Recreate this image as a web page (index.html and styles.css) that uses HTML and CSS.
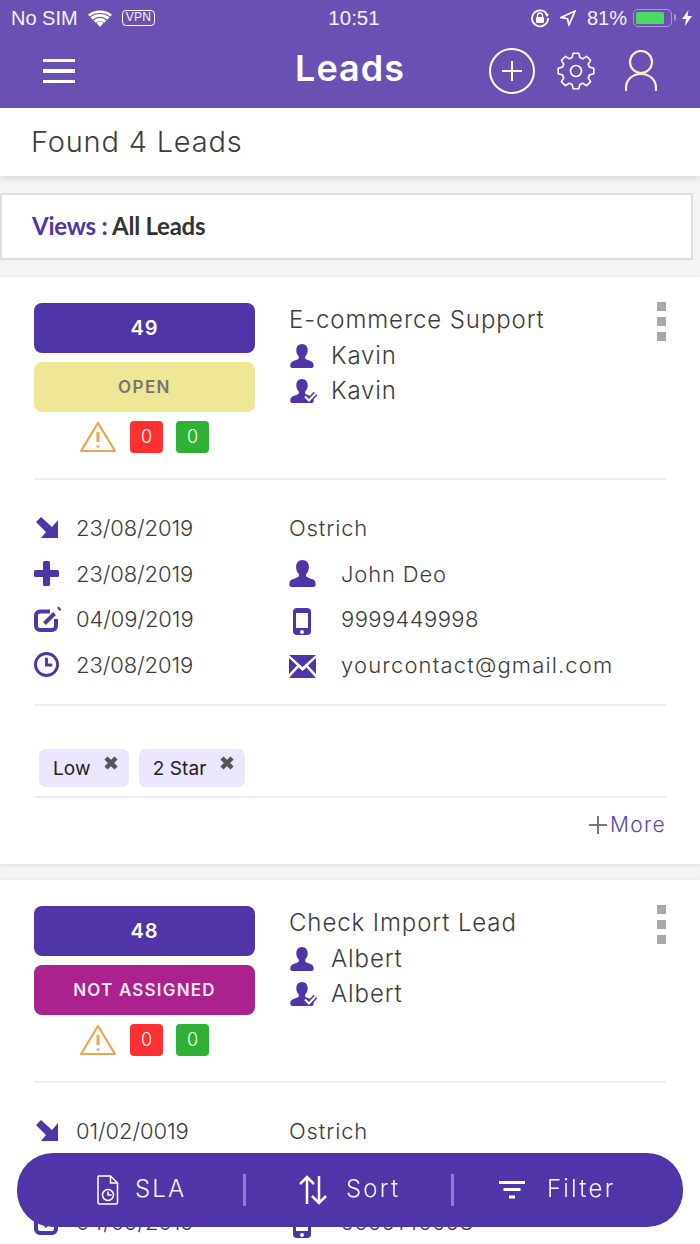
FILE: index.html
```html
<!DOCTYPE html>
<html lang="en">
<head>
<meta charset="utf-8">
<title>Leads</title>
<link rel="stylesheet" href="styles.css">
</head>
<body>
<svg class="defs" width="0" height="0" aria-hidden="true">
  <symbol id="i-person" viewBox="0 0 24 24"><path d="M12 0c3.700 0 5.700 2.800 5.700 6.200 0 2.600-1 4.900-2.500 6.300v1.700c0 1 3.800 2 6.200 3.200 1.800.9 2.300 2.300 2.300 4.400 0 1.300-.8 2.200-2 2.200H2.300c-1.200 0-2-.9-2-2.200 0-2.100.5-3.500 2.300-4.400 2.400-1.200 6.200-2.200 6.200-3.200v-1.700C7.300 11.100 6.300 8.800 6.300 6.200 6.300 2.800 8.300 0 12 0z"/></symbol>
  <symbol id="i-assign" viewBox="0 0 28 24"><path d="M12 0c3.700 0 5.700 2.800 5.700 6.200 0 2.600-1 4.900-2.500 6.300v1.700c0 1 3.800 2 6.200 3.200 1.800.9 2.300 2.300 2.300 4.400 0 1.300-.8 2.200-2 2.200H2.300c-1.200 0-2-.9-2-2.200 0-2.100.5-3.500 2.300-4.400 2.400-1.200 6.200-2.200 6.200-3.200v-1.700C7.300 11.100 6.300 8.800 6.300 6.200 6.300 2.800 8.300 0 12 0z"/><path class="check-edge" d="M15 17.500l4 4 6.500-7"/><path class="check" d="M15 17.500l4 4 6.500-7"/></symbol>
  <symbol id="i-arrow" viewBox="0 0 22 21"><path d="M5 0L0 5l10 10-5 6h17V3l-6 7z"/></symbol>
  <symbol id="i-plus" viewBox="0 0 25 25"><path d="M9 1.500A1.500 1.500 0 0 1 10.500 0h4A1.500 1.500 0 0 1 16 1.500V9h7.500A1.500 1.500 0 0 1 25 10.500v4a1.500 1.500 0 0 1-1.500 1.500H16v7.500a1.500 1.500 0 0 1-1.500 1.500h-4A1.500 1.500 0 0 1 9 23.500V16H1.500A1.500 1.500 0 0 1 0 14.500v-4A1.500 1.500 0 0 1 1.500 9H9z"/></symbol>
  <symbol id="i-edit" viewBox="0 0 28 26"><path class="line-thick" d="M16 5.500H6a4 4 0 0 0-4 4V20a4 4 0 0 0 4 4h12a4 4 0 0 0 4-4V13"/><path class="line-thick" d="M10.500 17.500L20.500 7.500M24.500 3.500L26 2"/></symbol>
  <symbol id="i-clock" viewBox="0 0 26 26"><circle class="line" cx="13" cy="13" r="11.500"/><path class="line" d="M13 6v7.500h6"/></symbol>
  <symbol id="i-phone" viewBox="0 0 18 27"><path fill-rule="evenodd" d="M4 0h10a4 4 0 0 1 4 4v19a4 4 0 0 1-4 4H4a4 4 0 0 1-4-4V4a4 4 0 0 1 4-4zM3 5v15h12V5zm6 17a2 2 0 1 0 0 4 2 2 0 0 0 0-4z"/></symbol>
  <symbol id="i-mail" viewBox="0 0 27 23"><path d="M0 0h27L13.500 12zM0 3l8 7.500L0 19zM27 3v16l-8-8.500zM0 23l9.500-10.500 4 3.500 4-3.500L27 23z"/></symbol>
  <symbol id="i-warn" viewBox="0 0 38 32"><path class="warn-line" d="M19 2L2 30h34z"/><path class="warn-mark" d="M19 11v10M19 24.500v2"/></symbol>
  <symbol id="i-x" viewBox="0 0 18 18"><path class="x-line" d="M4 4l10 10M14 4L4 14"/></symbol>
</svg>

<header class="top">
  <div class="status">
    <div class="status-left">
      <span>No SIM</span>
      <svg class="wifi" viewBox="0 0 24 17"><path d="M12 17l3.500-4a5 5 0 0 0-7 0zM5.500 10.500l2 2.200a7 7 0 0 1 9 0l2-2.200a10 10 0 0 0-13 0zM2.500 7.300l2 2.200a12 12 0 0 1 15 0l2-2.200a15 15 0 0 0-19 0zM0 4.500l1.800 2a17 17 0 0 1 20.400 0l1.800-2a20 20 0 0 0-24 0z"/></svg>
      <span class="vpn">VPN</span>
    </div>
    <span class="clock-time">10:51</span>
    <div class="status-right">
      <svg class="lock" viewBox="0 0 20 20"><path class="stroke-white" d="M17 6.500A8 8 0 1 0 18 10"/><path d="M15 6h4l-2 3z"/><path class="stroke-thin" d="M7.500 9V7.500a2.500 2.500 0 0 1 5 0V9"/><rect x="6" y="9" width="8" height="6" rx="1"/></svg>
      <svg class="loc" viewBox="0 0 16 16"><path class="stroke-white" d="M15 1L1 7.500l6.500 1.200L9 15z"/></svg>
      <span>81%</span>
      <span class="battery"><span class="battery-fill"></span></span>
      <svg class="bolt" viewBox="0 0 10 16"><path d="M6.500 0L0 9h4l-1 7 7-10H5.500z"/></svg>
    </div>
  </div>
  <nav class="nav">
    <div class="burger"><span></span><span></span><span></span></div>
    <h1 class="title">Leads</h1>
    <div class="nav-icons">
      <svg class="nav-plus" viewBox="0 0 46 46"><circle cx="23" cy="23" r="22"/><path d="M23 13v20M13 23h20"/></svg>
      <svg class="nav-gear" viewBox="-20 -20 40 40"><polygon points="13.500,-3.900 17.800,-2.800 17.800,2.800 13.500,3.900 12.200,6.800 14.600,10.600 10.600,14.600 6.800,12.200 3.900,13.500 2.800,17.800 -2.800,17.800 -3.900,13.500 -6.800,12.200 -10.600,14.600 -14.600,10.600 -12.200,6.800 -13.500,3.900 -17.800,2.800 -17.800,-2.800 -13.500,-3.900 -12.200,-6.800 -14.600,-10.600 -10.600,-14.600 -6.800,-12.200 -3.900,-13.500 -2.800,-17.800 2.800,-17.800 3.900,-13.500 6.800,-12.200 10.600,-14.600 14.600,-10.600 12.200,-6.800"/><circle r="5.500"/></svg>
      <svg class="nav-user" viewBox="0 0 32 42"><circle cx="16" cy="12" r="11"/><path d="M1 41v-3c0-8 6-14 15-14s15 6 15 14v3"/></svg>
    </div>
  </nav>
</header>

<section class="found">Found 4 Leads</section>
<section class="views"><span class="views-label">Views :</span> All Leads</section>

<article class="card">
  <div class="summary">
    <div class="badges">
      <div class="badge badge-id">49</div>
      <div class="badge badge-open">OPEN</div>
      <div class="counts">
        <svg class="warn"><use href="#i-warn"/></svg>
        <span class="count count-red">0</span>
        <span class="count count-green">0</span>
      </div>
    </div>
    <div class="owner">
      <div class="owner-title">E-commerce Support</div>
      <div class="owner-row"><svg class="ico-owner"><use href="#i-person"/></svg>Kavin</div>
      <div class="owner-row"><svg class="ico-assign"><use href="#i-assign"/></svg>Kavin</div>
    </div>
    <div class="kebab"><span></span><span></span><span></span></div>
  </div>
  <div class="details">
    <div class="cell cell-date"><svg class="ico ico-a"><use href="#i-arrow"/></svg>23/08/2019</div>
    <div class="cell">Ostrich</div>
    <div class="cell cell-date"><svg class="ico ico-p"><use href="#i-plus"/></svg>23/08/2019</div>
    <div class="cell"><svg class="ico-r ico-person"><use href="#i-person"/></svg>John Deo</div>
    <div class="cell cell-date"><svg class="ico ico-e"><use href="#i-edit"/></svg>04/09/2019</div>
    <div class="cell cell-num"><svg class="ico-r ico-phone"><use href="#i-phone"/></svg>9999449998</div>
    <div class="cell cell-date"><svg class="ico ico-c"><use href="#i-clock"/></svg>23/08/2019</div>
    <div class="cell cell-mail"><svg class="ico-r ico-mail"><use href="#i-mail"/></svg>yourcontact@gmail.com</div>
  </div>
  <div class="tags">
    <span class="tag">Low<svg class="tag-x"><use href="#i-x"/></svg></span>
    <span class="tag">2 Star<svg class="tag-x"><use href="#i-x"/></svg></span>
  </div>
  <div class="more"><svg class="more-plus" viewBox="0 0 18 18"><path d="M9 0v18M0 9h18"/></svg>More</div>
</article>

<article class="card">
  <div class="summary">
    <div class="badges">
      <div class="badge badge-id">48</div>
      <div class="badge badge-na">NOT ASSIGNED</div>
      <div class="counts">
        <svg class="warn"><use href="#i-warn"/></svg>
        <span class="count count-red">0</span>
        <span class="count count-green">0</span>
      </div>
    </div>
    <div class="owner">
      <div class="owner-title">Check Import Lead</div>
      <div class="owner-row"><svg class="ico-owner"><use href="#i-person"/></svg>Albert</div>
      <div class="owner-row"><svg class="ico-assign"><use href="#i-assign"/></svg>Albert</div>
    </div>
    <div class="kebab"><span></span><span></span><span></span></div>
  </div>
  <div class="details">
    <div class="cell cell-date"><svg class="ico ico-a"><use href="#i-arrow"/></svg>01/02/0019</div>
    <div class="cell">Ostrich</div>
    <div class="cell"></div>
    <div class="cell"></div>
    <div class="cell cell-date"><svg class="ico ico-e"><use href="#i-edit"/></svg>04/09/2019</div>
    <div class="cell cell-num"><svg class="ico-r ico-phone"><use href="#i-phone"/></svg>9999149998</div>
  </div>
</article>

<footer class="actions">
  <div class="action action-sla">
    <svg class="act-sla" viewBox="0 0 22 30"><path d="M1.500 1h12l7 7v19.500a1.500 1.500 0 0 1-1.500 1.500H2.500A1.500 1.500 0 0 1 1 27.500V2z"/><path d="M13.500 1v7h7"/><circle cx="11" cy="20" r="5.500"/><path d="M11 16.500V20h3.500"/></svg>
    <span class="action-text">SLA</span>
  </div>
  <div class="action action-sort">
    <svg class="act-sort" viewBox="0 0 28 30"><path d="M8 29V2M1 9l7-7 7 7M20 1v27M13 21l7 7 7-7"/></svg>
    <span class="action-text">Sort</span>
  </div>
  <div class="action action-filter">
    <svg class="act-filter" viewBox="0 0 26 18"><path d="M0 1.500h26M4.500 8.500h17M10 16h6"/></svg>
    <span class="action-text">Filter</span>
  </div>
</footer>
</body>
</html>
```
FILE: styles.css
```css
* { box-sizing: border-box; }
html, body { margin: 0; padding: 0; }
body {
  height: 1244px;
  overflow: hidden;
  background: #f4f4f4;
  font-family: Inter, "Liberation Sans", sans-serif;
  color: #3c3c3c;
}
.defs { display: block; height: 0; }

/* header */
.top { height: 108px; background: #6a50b3; color: #fff; }
.status {
  height: 36px;
  padding: 0 8px 0 11px;
  display: grid;
  grid-template-columns: 1fr auto 1fr;
  align-items: center;
  font-family: "Liberation Sans", sans-serif;
  font-size: 20px;
  color: #f3f0fa;
}
.status-left, .status-right { display: flex; align-items: center; }
.status-right { justify-content: flex-end; }
.status-left span:first-child { margin-right: 10px; }
.wifi { width: 24px; height: 17px; fill: #fff; margin-right: 10px; }
.vpn {
  font-size: 12px;
  line-height: 13px;
  height: 16px;
  padding: 0 3px;
  border: 1.500px solid #fff;
  border-radius: 4px;
  letter-spacing: .3px;
}
.clock-time { font-size: 20.500px; margin-left: 5px; }
.lock { width: 20px; height: 20px; fill: #fff; margin-right: 10px; }
.loc { width: 16px; height: 16px; fill: none; margin-right: 11px; }
.stroke-white { fill: none; stroke: #fff; stroke-width: 1.800; }
.stroke-thin { fill: none; stroke: #fff; stroke-width: 1.300; }
.battery {
  position: relative;
  width: 39px;
  height: 18px;
  margin-left: 6px;
  padding: 2px;
  border: 1.500px solid #a797d8;
  border-radius: 5px;
  display: block;
}
.battery::after {
  content: "";
  position: absolute;
  right: -4.500px;
  top: 4px;
  width: 2px;
  height: 7px;
  background: #a797d8;
  border-radius: 0 2px 2px 0;
}
.battery-fill { display: block; width: 28px; height: 100%; background: #4cd964; border-radius: 1.500px; }
.bolt { width: 10px; height: 16px; margin-left: 10px; fill: #fff; }

.nav {
  height: 72px;
  padding: 0 43px;
  display: grid;
  grid-template-columns: 1fr auto 1fr;
  align-items: center;
}
.burger { display: flex; flex-direction: column; gap: 7px; width: 32px; margin-top: -2px; }
.burger span { display: block; height: 3.500px; background: #fff; }
.title {
  margin: -8px 0 0 0;
  font-size: 36px;
  line-height: 44px;
  font-weight: 600;
  letter-spacing: 1px;
}
.nav-icons { display: flex; align-items: center; justify-content: flex-end; gap: 21px; margin-top: -2px; }
.nav-plus { width: 46px; height: 46px; fill: none; stroke: #fff; stroke-width: 2; }
.nav-gear { width: 40px; height: 40px; fill: none; stroke: #fff; stroke-width: 1.600; stroke-linejoin: round; }
.nav-user { width: 32px; height: 42px; fill: none; stroke: #ffe9cf; stroke-width: 2.200; margin-left: 8px; }

/* summary bars */
.found {
  height: 68px;
  padding-left: 31px;
  background: #fff;
  box-shadow: 0 3px 6px rgba(0,0,0,.1);
  font-size: 29px;
  font-weight: 300;
  line-height: 68px;
  letter-spacing: .8px;
  position: relative;
}
.views {
  height: 67px;
  width: 693px;
  margin-top: 17px;
  padding-left: 30px;
  background: #fff;
  border: 2px solid #dedede;
  font-family: Lato, sans-serif;
  font-size: 24px;
  font-weight: 700;
  line-height: 61px;
  letter-spacing: -.25px;
  color: #333;
}
.views-label { color: #5035a8; }

/* card */
.card {
  margin-top: 17px;
  padding: 26px 34px 0;
  height: 587px;
  background: #fff;
  box-shadow: 0 1px 4px rgba(0,0,0,.1);
}
.card + .card { margin-top: 16px; }
.summary {
  display: flex;
  height: 177px;
  border-bottom: 2px solid #eeeeee;
}
.badges { width: 221px; flex: none; }
.badge {
  height: 50px;
  margin-bottom: 9px;
  border-radius: 8px;
  text-align: center;
  line-height: 50px;
  font-size: 18px;
  font-weight: 600;
  letter-spacing: 1px;
}
.badge-id { background: #5035a8; color: #fff; font-size: 20px; }
.badge-open { background: #f0e796; color: #76766f; font-size: 17px; letter-spacing: 1.400px; }
.badge-na { background: #ab218e; color: #f6e7f2; font-size: 17px; letter-spacing: 1.200px; }
.counts { display: flex; justify-content: center; align-items: center; gap: 13px; height: 32px; padding-right: 1px; }
.warn { width: 38px; height: 32px; }
.warn-line { fill: none; stroke: #f3a24a; stroke-width: 2.200; stroke-linejoin: round; }
.warn-mark { fill: none; stroke: #f3a24a; stroke-width: 3; }
.count {
  width: 33px;
  height: 32px;
  border-radius: 4px;
  color: #fff;
  font-size: 18px;
  font-weight: 300;
  line-height: 32px;
  text-align: center;
}
.count-red { background: #ff3030; }
.count-green { background: #2eb135; }
.owner { flex: 1; margin-left: 34px; font-size: 24px; letter-spacing: .9px; font-weight: 300; }
.owner-title { height: 35px; line-height: 34px; }
.owner-row { height: 35.500px; line-height: 36px; display: flex; align-items: center; }
.owner-row svg { fill: #5035a8; }
.ico-owner { width: 24px; height: 24px; margin: 0 17px 0 1px; }
.ico-assign { width: 28px; height: 24px; margin: 0 13px 0 1px; }
.check-edge { fill: none; stroke: #5035a8; stroke-width: 5; }
.check { fill: none; stroke: #fff; stroke-width: 2; }
.kebab { display: flex; flex-direction: column; gap: 6px; margin-top: -1px; }
.kebab span { width: 9px; height: 9px; background: #a8a8a8; }

.details {
  display: grid;
  grid-template-columns: 255px 1fr;
  grid-auto-rows: 45.700px;
  padding-top: 25px;
  height: 226px;
  border-bottom: 2px solid #eeeeee;
  font-size: 22px;
  font-weight: 300;
  letter-spacing: .85px;
}
.cell { display: flex; align-items: center; }
.cell-date { letter-spacing: -.1px; }
.cell-num { letter-spacing: .4px; }
.cell-mail { letter-spacing: 1.150px; }
.ico { width: 25px; height: 25px; margin-right: 17px; fill: #5035a8; flex: none; }
.ico-a { width: 22px; height: 21px; margin: 0 18px 0 2px; }
.ico-e { width: 28px; height: 26px; margin-right: 14px; }
.line { fill: none; stroke: #5035a8; stroke-width: 3; }
.line-thick { fill: none; stroke: #5035a8; stroke-width: 4; }
.ico-r { flex: none; fill: #5035a8; }
.ico-person { width: 27px; height: 27px; margin-right: 25px; }
.ico-phone { width: 18px; height: 27px; margin: 4px 30px 0 4px; }
.ico-mail { width: 27px; height: 23px; margin: 4px 25px 0 0; }

.tags {
  display: flex;
  gap: 10px;
  height: 92px;
  padding: 43px 5px 0;
  border-bottom: 2px solid #eeeeee;
}
.tag {
  height: 38px;
  padding: 0 9px 0 14px;
  display: flex;
  align-items: center;
  background: #ebe6fc;
  border-radius: 7px;
  color: #222;
  font-size: 19px;
  letter-spacing: .1px;
}
.tag-x { width: 18px; height: 18px; margin: -10px 0 0 11px; }
.x-line { fill: none; stroke: #555; stroke-width: 4.500; }
.more {
  display: flex;
  justify-content: flex-end;
  align-items: center;
  height: 52px;
  color: #5a3fb5;
  font-size: 21px;
  font-weight: 300;
  letter-spacing: 1.300px;
}
.more-plus { width: 18px; height: 18px; margin: 2px 3px 0 0; fill: none; stroke: #777; stroke-width: 2; }

/* floating actions */
.actions {
  position: fixed;
  left: 17px;
  right: 17px;
  top: 1153px;
  height: 74px;
  display: flex;
  align-items: center;
  background: #5035a8;
  border-radius: 36px;
  color: #f4f1fb;
  font-size: 24px;
  font-weight: 300;
  letter-spacing: 2.200px;
}
.action { height: 32px; display: flex; align-items: center; }
.action-text { padding-bottom: 3px; }
.action-sla { width: 226px; padding-left: 80px; }
.action-sort { width: 208px; padding-left: 53px; border-left: 3px solid #8f7ecb; }
.action-filter { flex: 1; padding-left: 45px; border-left: 3px solid #8f7ecb; }
.action svg { fill: none; stroke: #fff; }
.act-sla { width: 22px; height: 30px; margin-right: 16px; stroke-width: 1.500; }
.act-sort { width: 28px; height: 30px; margin-right: 19px; stroke-width: 2.500; }
.act-filter { width: 26px; height: 18px; margin-right: 22px; stroke-width: 3; }
```
